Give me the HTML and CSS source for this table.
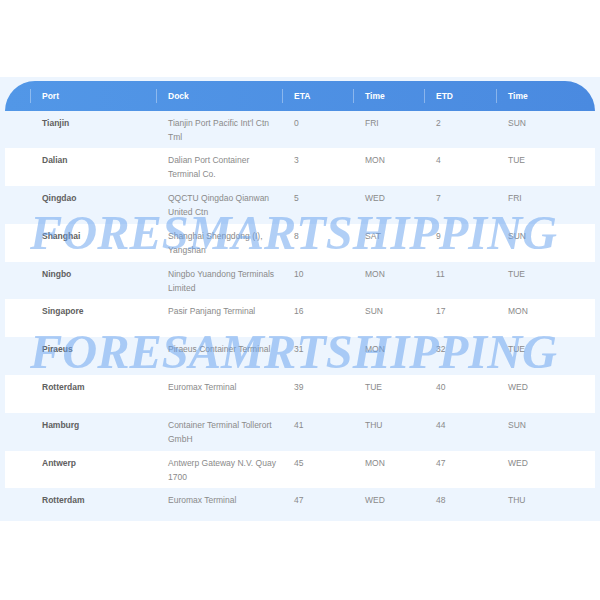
FILE: index.html
```html
<!DOCTYPE html>
<html>
<head>
<meta charset="utf-8">
<link rel="stylesheet" href="styles.css">
</head>
<body>
<div class="page">
  <div class="panel">
    <div class="table">
      <div class="row head">
        <div class="hc">Port</div>
        <div class="hc">Dock</div>
        <div class="hc">ETA</div>
        <div class="hc">Time</div>
        <div class="hc">ETD</div>
        <div class="hc">Time</div>
      </div>
      <div class="row">
        <div class="c port">Tianjin</div><div class="c">Tianjin Port Pacific Int'l Ctn Tml</div><div class="c">0</div><div class="c">FRI</div><div class="c">2</div><div class="c">SUN</div>
      </div>
      <div class="row alt">
        <div class="c port">Dalian</div><div class="c">Dalian Port Container Terminal Co.</div><div class="c">3</div><div class="c">MON</div><div class="c">4</div><div class="c">TUE</div>
      </div>
      <div class="row">
        <div class="c port">Qingdao</div><div class="c">QQCTU Qingdao Qianwan United Ctn</div><div class="c">5</div><div class="c">WED</div><div class="c">7</div><div class="c">FRI</div>
      </div>
      <div class="row alt">
        <div class="c port">Shanghai</div><div class="c">Shanghai Shengdong (I), Yangshan</div><div class="c">8</div><div class="c">SAT</div><div class="c">9</div><div class="c">SUN</div>
      </div>
      <div class="row">
        <div class="c port">Ningbo</div><div class="c">Ningbo Yuandong Terminals Limited</div><div class="c">10</div><div class="c">MON</div><div class="c">11</div><div class="c">TUE</div>
      </div>
      <div class="row alt">
        <div class="c port">Singapore</div><div class="c">Pasir Panjang Terminal</div><div class="c">16</div><div class="c">SUN</div><div class="c">17</div><div class="c">MON</div>
      </div>
      <div class="row">
        <div class="c port">Piraeus</div><div class="c">Piraeus Container Terminal</div><div class="c">31</div><div class="c">MON</div><div class="c">32</div><div class="c">TUE</div>
      </div>
      <div class="row alt">
        <div class="c port">Rotterdam</div><div class="c">Euromax Terminal</div><div class="c">39</div><div class="c">TUE</div><div class="c">40</div><div class="c">WED</div>
      </div>
      <div class="row">
        <div class="c port">Hamburg</div><div class="c">Container Terminal Tollerort GmbH</div><div class="c">41</div><div class="c">THU</div><div class="c">44</div><div class="c">SUN</div>
      </div>
      <div class="row alt">
        <div class="c port">Antwerp</div><div class="c">Antwerp Gateway N.V. Quay 1700</div><div class="c">45</div><div class="c">MON</div><div class="c">47</div><div class="c">WED</div>
      </div>
      <div class="row">
        <div class="c port">Rotterdam</div><div class="c">Euromax Terminal</div><div class="c">47</div><div class="c">WED</div><div class="c">48</div><div class="c">THU</div>
      </div>
    </div>
    <div class="wm wm1">FORESMARTSHIPPING</div>
    <div class="wm wm2">FORESAMRTSHIPPING</div>
  </div>
</div>
</body>
</html>
```
FILE: styles.css
```css
html, body {
  margin: 0;
  padding: 0;
  background: #ffffff;
}
.page {
  padding-top: 77px;
  font-family: "Liberation Sans", Arial, sans-serif;
  font-size: 8.5px;
}
.panel {
  position: relative;
  background: #edf5fe;
  padding: 3.5px 5px 0;
  height: 444px;
  box-sizing: border-box;
  overflow: hidden;
}
.table {
  display: flex;
  flex-direction: column;
}
.row {
  display: grid;
  grid-template-columns: 126px 126px 71px 71px 72px 1fr;
  padding-left: 25px;
  height: 37.8px;
  flex: none;
  box-sizing: border-box;
}
.row.alt {
  background: #ffffff;
}
.row.head {
  height: 30px;
  background: linear-gradient(90deg, #5297e7, #4a8ae0);
  border-radius: 30px 30px 0 0;
  color: #ffffff;
  font-weight: bold;
}
.hc {
  display: flex;
  align-items: center;
}
.hc::before {
  content: "";
  width: 1px;
  height: 14px;
  background: rgba(255, 255, 255, 0.35);
  margin-right: 11px;
}
.c {
  padding: 5px 0 0 12px;
  line-height: 14px;
  color: #8a8a8a;
}
.c.port {
  color: #606060;
  font-weight: bold;
}
.wm {
  position: absolute;
  left: 30px;
  font-family: "Liberation Serif", "Times New Roman", serif;
  font-style: italic;
  font-weight: bold;
  font-size: 48.4px;
  line-height: 52px;
  color: rgba(100, 160, 238, 0.5);
  white-space: nowrap;
  pointer-events: none;
}
.wm1 {
  top: 130px;
}
.wm2 {
  top: 249px;
}
```
